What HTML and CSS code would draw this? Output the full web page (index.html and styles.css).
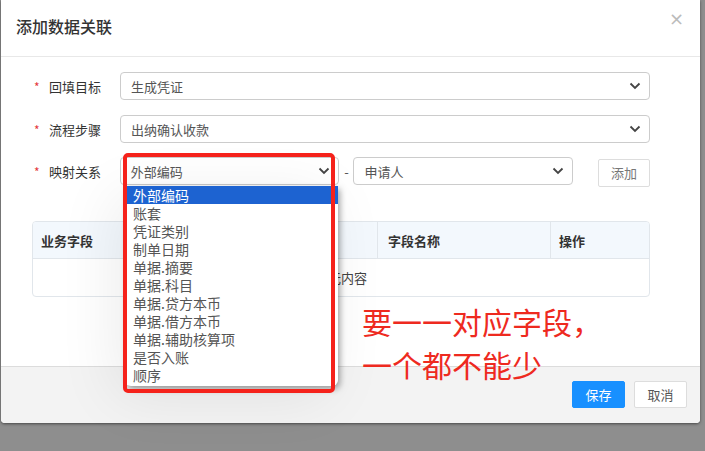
FILE: index.html
```html
<!DOCTYPE html>
<html lang="zh">
<head>
<meta charset="utf-8">
<link rel="stylesheet" href="styles.css">
</head>
<body>
<div class="modal">
  <div class="modal-header">
    <div class="title">添加数据关联</div>
    <div class="close">×</div>
  </div>
  <div class="modal-body">
    <div class="form-row">
      <div class="label"><span class="req">*</span>回填目标</div>
      <div class="select full"><span>生成凭证</span><svg class="chev" viewBox="0 0 12 8"><path d="M1.5 1.5 L6 6 L10.5 1.5"/></svg></div>
    </div>
    <div class="form-row">
      <div class="label"><span class="req">*</span>流程步骤</div>
      <div class="select full"><span>出纳确认收款</span><svg class="chev" viewBox="0 0 12 8"><path d="M1.5 1.5 L6 6 L10.5 1.5"/></svg></div>
    </div>
    <div class="form-row">
      <div class="label"><span class="req">*</span>映射关系</div>
      <div class="select half"><span>外部编码</span><svg class="chev" viewBox="0 0 12 8"><path d="M1.5 1.5 L6 6 L10.5 1.5"/></svg></div>
      <div class="dash">-</div>
      <div class="select half"><span>申请人</span><svg class="chev" viewBox="0 0 12 8"><path d="M1.5 1.5 L6 6 L10.5 1.5"/></svg></div>
      <div class="btn-add">添加</div>
    </div>
    <div class="table">
      <div class="thead">
        <div class="th c1">业务字段</div>
        <div class="th c2">字段名称</div>
        <div class="th c3">操作</div>
      </div>
      <div class="empty">暂无内容</div>
    </div>
  </div>
  <div class="modal-footer">
    <div class="btn primary">保存</div>
    <div class="btn">取消</div>
  </div>

  <ul class="dropdown">
    <li class="active">外部编码</li>
    <li>账套</li>
    <li>凭证类别</li>
    <li>制单日期</li>
    <li>单据.摘要</li>
    <li>单据.科目</li>
    <li>单据.贷方本币</li>
    <li>单据.借方本币</li>
    <li>单据.辅助核算项</li>
    <li>是否入账</li>
    <li>顺序</li>
  </ul>
  <div class="redbox"></div>
  <div class="note">要一一对应字段，<br>一个都不能少</div>
</div>
</body>
</html>
```
FILE: styles.css
```css
* { box-sizing: border-box; }
html, body { margin: 0; padding: 0; }
body {
  width: 705px;
  height: 451px;
  background: #8e8e8e;
  font-family: "Noto Sans CJK SC", "Noto Sans", sans-serif;
  overflow: hidden;
}
.modal {
  position: relative;
  margin-left: 1px;
  width: 699px;
  height: 423px;
  background: #fff;
  border-radius: 0 0 4px 4px;
  display: flex;
  flex-direction: column;
  box-shadow: 0 1px 3px rgba(0,0,0,0.5);
}
.modal-header {
  height: 57px;
  border-bottom: 1px solid #e8e8e8;
  display: flex;
  align-items: center;
  justify-content: space-between;
  padding: 0 16px 2px 15px;
}
.title {
  font-size: 16px;
  color: #333;
  font-weight: 500;
  margin-top: -2px;
}
.close {
  font-size: 18px;
  color: #bbb;
  margin-top: -18px;
  font-family: "DejaVu Sans", sans-serif;
}
.modal-body {
  flex: 1;
  padding: 15px 50px 0 31px;
}
.form-row {
  display: flex;
  align-items: center;
  height: 28px;
  margin-bottom: 15px;
}
.form-row:nth-child(2) { margin-bottom: 14px; }
.label {
  width: 88px;
  font-size: 13px;
  color: #333;
  display: flex;
  align-items: center;
}
.req {
  color: #e4393c;
  width: 17px;
  font-size: 12px;
  padding-left: 2px;
}
.select {
  height: 28px;
  border: 1px solid #ccc;
  border-radius: 4px;
  display: flex;
  align-items: center;
  justify-content: space-between;
  padding: 0 8px 0 10px;
  font-size: 13px;
  color: #555;
  background: #fff;
}
.select.full { flex: 1; }
.select.half { width: 220px; }
.chev {
  width: 12px;
  height: 8px;
  fill: none;
  stroke: #444;
  stroke-width: 1.8;
}
.dash {
  width: 14px;
  text-align: center;
  color: #555;
  font-size: 13px;
}
.btn-add {
  margin-left: 25px;
  width: 52px;
  height: 28px;
  border: 1px solid #ddd;
  border-radius: 2px;
  display: flex;
  align-items: center;
  justify-content: center;
  font-size: 13px;
  color: #777;
  margin-top: 3px;
}
.table {
  margin-top: 36px;
  width: 618px;
  border: 1px solid #e1e6eb;
  border-radius: 4px;
  overflow: hidden;
}
.thead {
  display: flex;
  height: 37px;
  background: #f3f8fd;
  border-bottom: 1px solid #e1e6eb;
}
.th {
  display: flex;
  align-items: center;
  padding-left: 8px;
  font-size: 13px;
  font-weight: 700;
  color: #333;
}
.c1 { width: 345px; border-right: 1px solid #e1e6eb; }
.c2 { width: 173px; border-right: 1px solid #e1e6eb; padding-left: 10px; }
.c3 { flex: 1; }
.empty {
  height: 37px;
  display: flex;
  align-items: center;
  justify-content: center;
  font-size: 13px;
  color: #444;
}
.modal-footer {
  height: 57px;
  border-top: 1px solid #dcdcdc;
  background: #f3f3f3;
  border-radius: 0 0 4px 4px;
  display: flex;
  justify-content: flex-end;
  align-items: center;
  gap: 9px;
  padding: 0 13px 1px 0;
}
.btn {
  width: 53px;
  height: 27px;
  border: 1px solid #ddd;
  background: #fff;
  border-radius: 2px;
  display: flex;
  align-items: center;
  justify-content: center;
  font-size: 13px;
  color: #555;
}
.btn.primary {
  background: #1890ff;
  border-color: #1890ff;
  color: #fff;
}
.dropdown {
  position: absolute;
  left: 124px;
  top: 186px;
  width: 213px;
  margin: 0;
  padding: 0 0 2px 0;
  list-style: none;
  background: #fff;
  border-radius: 0 0 6px 6px;
  box-shadow: 2px 3px 6px rgba(0,0,0,0.35), -10px 10px 60px rgba(0,0,0,0.08);
}
.dropdown li {
  height: 18px;
  line-height: 18px;
  font-size: 14px;
  color: #555;
  padding-left: 8px;
}
.dropdown li.active {
  background: #1d63d1;
  color: #fff;
}
.redbox {
  position: absolute;
  left: 122px;
  top: 153px;
  width: 212px;
  height: 240px;
  border: 4px solid #f5221b;
  border-radius: 5px;
}
.note {
  position: absolute;
  left: 361px;
  top: 300px;
  font-size: 30px;
  line-height: 43px;
  color: #ee2a1f;
  white-space: nowrap;
}
```
